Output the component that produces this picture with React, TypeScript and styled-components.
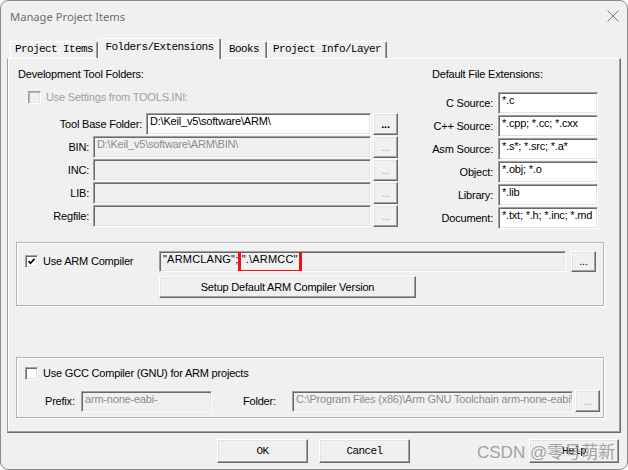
import React from 'react';
import styled, { createGlobalStyle } from 'styled-components';

const GlobalStyle = createGlobalStyle`
  html, body {
    margin: 0;
    padding: 0;
    background: #ffffff;
  }
  body {
    font-family: "Liberation Sans", Arial, sans-serif;
  }
`;

const Window = styled.div`
  position: relative;
  width: 628px;
  height: 470px;
  box-sizing: border-box;
  border: 1px solid #8c8c8c;
  border-radius: 8px;
  background: #f0f0f0;
  display: flex;
  flex-direction: column;
  overflow: hidden;
`;

const TitleBar = styled.div`
  height: 30px;
  flex: none;
  display: flex;
  align-items: center;
  justify-content: space-between;
  padding: 0 8px 0 9px;
  font-family: "Noto Sans", "Open Sans", sans-serif;
  font-size: 11.2px;
  color: #6e6e6e;
`;

const Content = styled.div`
  flex: 1;
  display: flex;
  flex-direction: column;
  padding: 7px 6px 0 6px;
`;

const TabStrip = styled.div`
  height: 20px;
  flex: none;
  display: flex;
  align-items: flex-end;
  padding-left: 3px;
`;

const Tab = styled.div<{ $w: number; $active?: boolean }>`
  position: relative;
  z-index: ${(p) => (p.$active ? 1 : 0)};
  width: ${(p) => p.$w}px;
  height: ${(p) => (p.$active ? 21 : 17)}px;
  margin-bottom: ${(p) => (p.$active ? -1 : 0)}px;
  box-sizing: border-box;
  padding-top: ${(p) => (p.$active ? 2 : 1)}px;
  border-top: 1px solid #ffffff;
  border-left: 1px solid #ffffff;
  border-right: 1px solid #696969;
  box-shadow: inset -1px 0 0 #a0a0a0;
  border-radius: 2px 2px 0 0;
  background: #f0f0f0;
  display: flex;
  justify-content: center;
  font-family: "Liberation Mono", "DejaVu Sans Mono", monospace;
  font-size: 11px;
  letter-spacing: -0.6px;
  line-height: 13px;
  color: #000;
  white-space: nowrap;
`;

const Panel = styled.div`
  height: 375px;
  flex: none;
  box-sizing: border-box;
  border-style: solid;
  border-width: 1px;
  border-color: #ffffff #696969 #696969 #a0a0a0;
  box-shadow: inset -1px -1px 0 #a0a0a0, inset 1px 0 0 #ffffff;
  padding: 9px 16px 0 8px;
  display: flex;
  flex-direction: column;
  font-size: 11px;
  letter-spacing: -0.2px;
  line-height: 13px;
  color: #000;
`;

const TopSection = styled.div`
  display: flex;
  gap: 34px;
`;

const LeftCol = styled.div`
  width: 382px;
  display: flex;
  flex-direction: column;
`;

const RightCol = styled.div`
  width: 166px;
  display: flex;
  flex-direction: column;
`;

const Heading = styled.div<{ $indent?: number }>`
  height: 13px;
  padding-left: ${(p) => p.$indent ?? 0}px;
  white-space: nowrap;
`;

const CheckRow = styled.div<{ $indent: number; $top?: number }>`
  display: flex;
  align-items: center;
  height: 13px;
  margin-top: ${(p) => p.$top ?? 0}px;
  padding-left: ${(p) => p.$indent}px;
  gap: 5px;
`;

const CheckLabel = styled.span<{ $disabled?: boolean }>`
  color: ${(p) => (p.$disabled ? '#a0a0a0' : '#000')};
  white-space: nowrap;
`;

const Box = styled.span<{ $disabled?: boolean }>`
  width: 13px;
  height: 13px;
  flex: none;
  box-sizing: border-box;
  border: 1px solid;
  border-color: #a0a0a0 #ffffff #ffffff #a0a0a0;
  box-shadow: inset 1px 1px 0 ${(p) => (p.$disabled ? '#b4b4b4' : '#696969')},
    inset -1px -1px 0 #e3e3e3;
  background: ${(p) => (p.$disabled ? '#f0f0f0' : '#ffffff')};
  display: flex;
  align-items: center;
  justify-content: center;
`;

const Rows = styled.div<{ $top: number }>`
  display: flex;
  flex-direction: column;
  gap: 1px;
  margin-top: ${(p) => p.$top}px;
`;

const FieldRow = styled.div`
  display: flex;
  align-items: center;
  height: 22px;
`;

const FieldLabel = styled.span<{ $w: number; $pad?: number }>`
  width: ${(p) => p.$w}px;
  flex: none;
  box-sizing: border-box;
  padding-right: ${(p) => p.$pad ?? 4}px;
  text-align: right;
  white-space: nowrap;
`;

const EditBox = styled.div<{ $w?: number; $h?: number; $dim?: boolean; $grey?: boolean; $wide?: boolean }>`
  ${(p) => (p.$w ? `width: ${p.$w}px; flex: none;` : 'flex: 1;')}
  height: ${(p) => p.$h ?? 22}px;
  box-sizing: border-box;
  border: 1px solid;
  border-color: #a0a0a0 #ffffff #ffffff #a0a0a0;
  box-shadow: inset 1px 1px 0 #696969, inset -1px -1px 0 #e3e3e3;
  background: ${(p) => (p.$grey ? '#f0f0f0' : '#ffffff')};
  color: ${(p) => (p.$dim ? '#8c8c8c' : '#000')};
  padding: 1px 3px 0 3px;
  letter-spacing: ${(p) => (p.$wide ? '0.2px' : 'inherit')};
  white-space: nowrap;
  overflow: hidden;
`;

const Highlight = styled.span`
  position: relative;
  &::after {
    content: '';
    position: absolute;
    left: -4px;
    right: -4px;
    top: -6px;
    bottom: -8px;
    border: 3px solid #f01010;
  }
`;

const RaisedButton = styled.button<{ $w: number; $h: number; $mono?: boolean; $dim?: boolean; $bold?: boolean }>`
  width: ${(p) => p.$w}px;
  height: ${(p) => p.$h}px;
  flex: none;
  box-sizing: border-box;
  margin: 0;
  padding: 0;
  border: 1px solid;
  border-color: #ffffff #696969 #696969 #ffffff;
  box-shadow: inset -1px -1px 0 #a0a0a0, inset 1px 1px 0 #e3e3e3;
  background: #f0f0f0;
  color: ${(p) => (p.$dim ? '#a0a0a0' : '#000')};
  font-family: ${(p) =>
    p.$mono ? '"Liberation Mono", "DejaVu Sans Mono", monospace' : '"Liberation Sans", Arial, sans-serif'};
  font-size: 11px;
  font-weight: ${(p) => (p.$bold ? 700 : 400)};
  letter-spacing: ${(p) => (p.$mono ? '-0.6px' : '-0.2px')};
  line-height: 13px;
  white-space: nowrap;
`;

const GroupBox = styled.div<{ $top: number }>`
  margin-top: ${(p) => p.$top}px;
  border: 1px solid #b4b4b4;
  box-shadow: inset 1px 1px 0 #ffffff, 1px 1px 0 #ffffff;
`;

const ArmGrid = styled.div`
  display: grid;
  grid-template-columns: 134px 1fr;
  row-gap: 4px;
  padding: 8px 7px 7px 8px;
  align-items: center;
`;

const InlineRow = styled.div<{ $gap: number }>`
  display: flex;
  align-items: center;
  gap: ${(p) => p.$gap}px;
`;

const GccBody = styled.div`
  padding: 9px 3px 5px 8px;
  display: flex;
  flex-direction: column;
`;

const GccRow = styled.div`
  display: flex;
  align-items: center;
  height: 22px;
  margin-top: 10px;
  padding-left: 20px;
`;

const PlainLabel = styled.span<{ $w: number; $after: number }>`
  width: ${(p) => p.$w}px;
  margin-right: ${(p) => p.$after}px;
  flex: none;
  white-space: nowrap;
`;

const Footer = styled.div`
  flex: 1;
  display: flex;
  justify-content: flex-end;
  align-items: flex-start;
  padding: 6px 2px 0 0;
  gap: 11px;
`;

const Spacer = styled.div<{ $w: number }>`
  width: ${(p) => p.$w - 22}px;
  flex: none;
`;

const Watermark = styled.div`
  position: absolute;
  left: 476px;
  top: 441px;
  font-family: "Liberation Sans", "Noto Sans CJK SC", sans-serif;
  font-size: 17px;
  line-height: 22px;
  color: rgba(140, 140, 140, 0.8);
  white-space: nowrap;
  pointer-events: none;
`;

const CloseIcon = () => (
  <svg width="12" height="12" viewBox="0 0 12 12">
    <path d="M0.5 0.5 L11.5 11.5 M11.5 0.5 L0.5 11.5" stroke="#7a7a7a" strokeWidth="1" fill="none" />
  </svg>
);

const CheckBox = ({ checked, disabled }: { checked?: boolean; disabled?: boolean }) => (
  <Box $disabled={disabled}>
    {checked && (
      <svg width="7" height="7" viewBox="0 0 7 7">
        <path d="M0.5 3 L2.5 5.2 L6.5 0.8" stroke="#000" strokeWidth="1.6" fill="none" />
      </svg>
    )}
  </Box>
);

const tabs = [
  { label: 'Project Items', w: 88 },
  { label: 'Folders/Extensions', w: 123, active: true },
  { label: 'Books', w: 46 },
  { label: 'Project Info/Layer', w: 120 },
];

const folders = [
  { label: 'BIN:', value: 'D:\\Keil_v5\\software\\ARM\\BIN\\' },
  { label: 'INC:', value: '' },
  { label: 'LIB:', value: '' },
  { label: 'Regfile:', value: '' },
];

const extensions = [
  { label: 'C Source:', value: '*.c' },
  { label: 'C++ Source:', value: '*.cpp; *.cc; *.cxx' },
  { label: 'Asm Source:', value: '*.s*; *.src; *.a*' },
  { label: 'Object:', value: '*.obj; *.o' },
  { label: 'Library:', value: '*.lib' },
  { label: 'Document:', value: '*.txt; *.h; *.inc; *.md' },
];

export default function App() {
  return (
    <>
      <GlobalStyle />
      <Window>
        <TitleBar>
          <span>Manage Project Items</span>
          <CloseIcon />
        </TitleBar>
        <Content>
          <TabStrip>
            {tabs.map((t) => (
              <Tab key={t.label} $w={t.w} $active={t.active}>
                {t.label}
              </Tab>
            ))}
          </TabStrip>
          <Panel>
            <TopSection>
              <LeftCol>
                <Heading $indent={2}>Development Tool Folders:</Heading>
                <CheckRow $indent={12} $top={10}>
                  <CheckBox disabled />
                  <CheckLabel $disabled>Use Settings from TOOLS.INI:</CheckLabel>
                </CheckRow>
                <Rows $top={9}>
                  <FieldRow>
                    <FieldLabel $w={130}>Tool Base Folder:</FieldLabel>
                    <EditBox>D:\Keil_v5\software\ARM\</EditBox>
                    <RaisedButton $w={25} $h={22} $bold style={{ marginLeft: 2 }}>
                      ...
                    </RaisedButton>
                  </FieldRow>
                  {folders.map((f) => (
                    <FieldRow key={f.label}>
                      <FieldLabel $w={77}>{f.label}</FieldLabel>
                      <EditBox $grey $dim>
                        {f.value}
                      </EditBox>
                      <RaisedButton $w={25} $h={22} $dim style={{ marginLeft: 2 }}>
                        ...
                      </RaisedButton>
                    </FieldRow>
                  ))}
                </Rows>
              </LeftCol>
              <RightCol>
                <Heading>Default File Extensions:</Heading>
                <Rows $top={11}>
                  {extensions.map((e) => (
                    <FieldRow key={e.label}>
                      <FieldLabel $w={66} $pad={5}>
                        {e.label}
                      </FieldLabel>
                      <EditBox $w={100}>{e.value}</EditBox>
                    </FieldRow>
                  ))}
                </Rows>
              </RightCol>
            </TopSection>

            <GroupBox $top={13}>
              <ArmGrid>
                <CheckRow $indent={0}>
                  <CheckBox checked />
                  <CheckLabel>Use ARM Compiler</CheckLabel>
                </CheckRow>
                <InlineRow $gap={5}>
                  <EditBox $h={21} $grey $wide>
                    "ARMCLANG"; <Highlight>".\ARMCC"</Highlight>
                  </EditBox>
                  <RaisedButton $w={25} $h={21}>
                    ...
                  </RaisedButton>
                </InlineRow>
                <span />
                <div>
                  <RaisedButton $w={257} $h={22}>
                    Setup Default ARM Compiler Version
                  </RaisedButton>
                </div>
              </ArmGrid>
            </GroupBox>

            <GroupBox $top={51}>
              <GccBody>
                <CheckRow $indent={0}>
                  <CheckBox />
                  <CheckLabel>Use GCC Compiler (GNU) for ARM projects</CheckLabel>
                </CheckRow>
                <GccRow>
                  <PlainLabel $w={30} $after={6}>
                    Prefix:
                  </PlainLabel>
                  <EditBox $w={131} $h={21} $grey $dim>
                    arm-none-eabi-
                  </EditBox>
                  <PlainLabel $w={33} $after={16} style={{ marginLeft: 31 }}>
                    Folder:
                  </PlainLabel>
                  <EditBox $h={21} $grey $dim>
                    C:\Program Files (x86)\Arm GNU Toolchain arm-none-eabi\
                  </EditBox>
                  <RaisedButton $w={25} $h={22} $dim style={{ marginLeft: 2 }}>
                    ...
                  </RaisedButton>
                </GccRow>
              </GccBody>
            </GroupBox>
          </Panel>
          <Footer>
            <RaisedButton $w={91} $h={24} $mono>
              OK
            </RaisedButton>
            <RaisedButton $w={91} $h={24} $mono>
              Cancel
            </RaisedButton>
            <Spacer $w={119} />
            <RaisedButton $w={90} $h={24} $mono>
              Help
            </RaisedButton>
          </Footer>
        </Content>
        <Watermark>CSDN @零号萌新</Watermark>
      </Window>
    </>
  );
}
